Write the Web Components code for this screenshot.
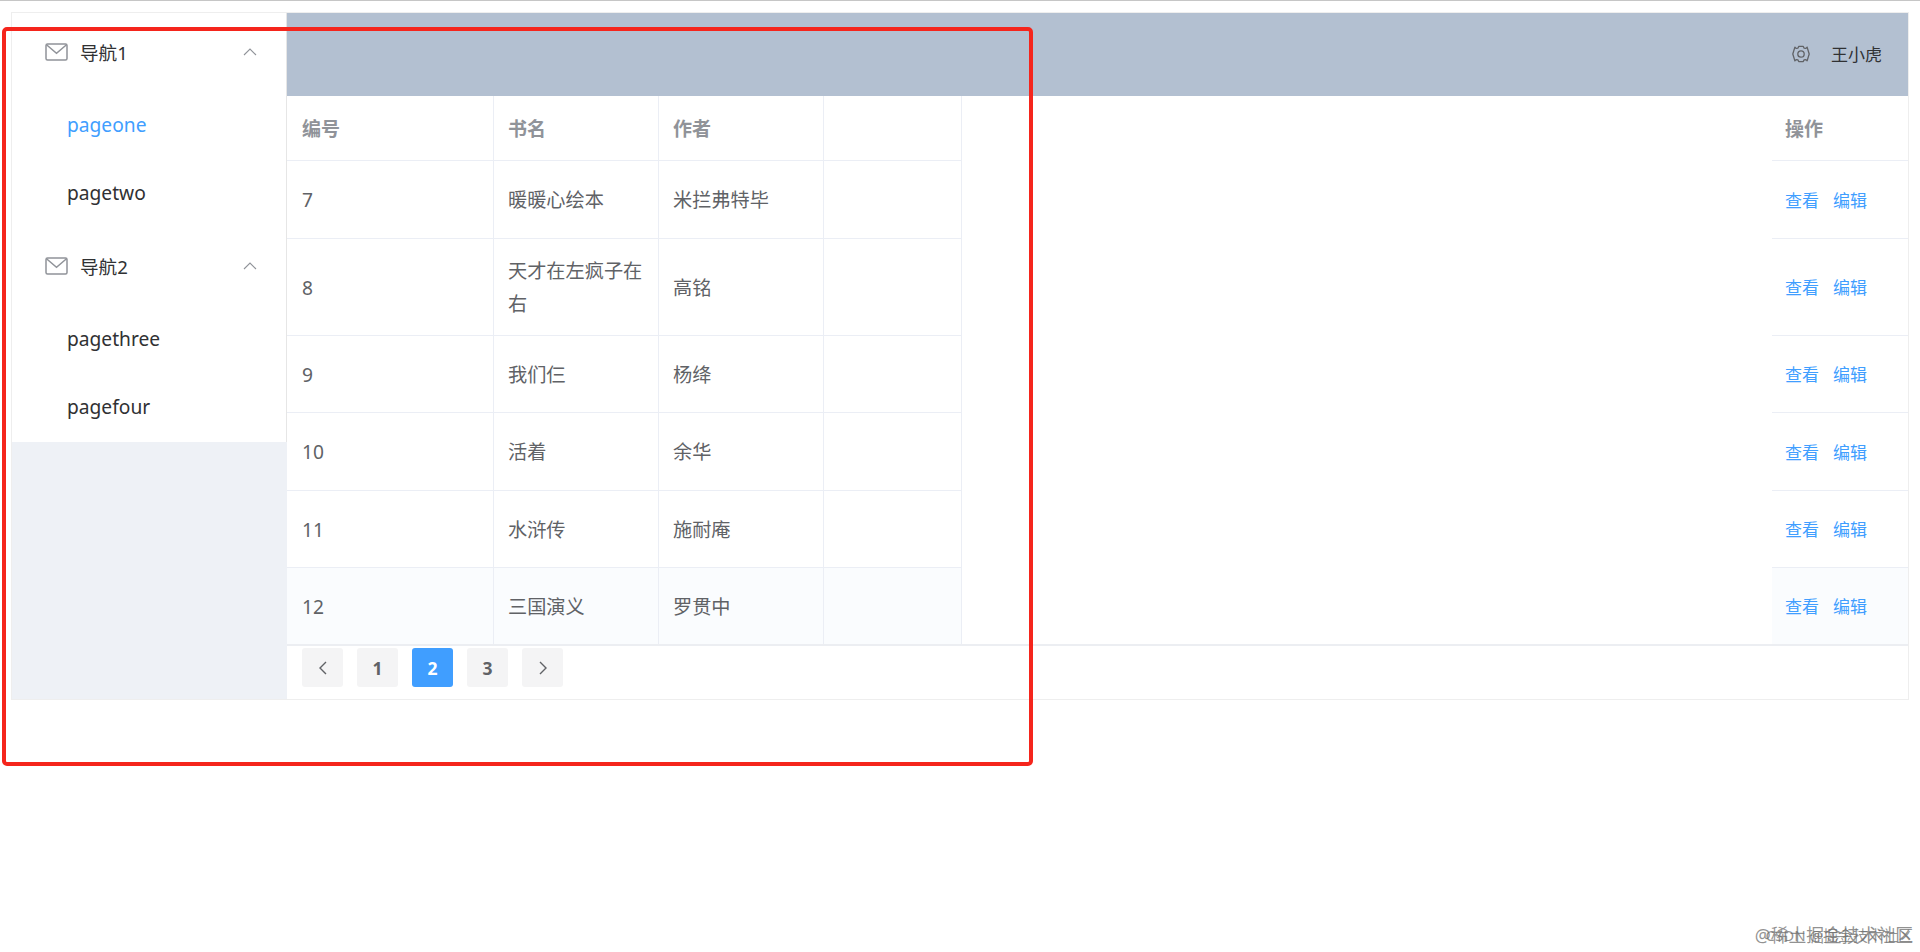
<!DOCTYPE html>
<html lang="zh">
<head>
<meta charset="utf-8">
<title>图书列表</title>
<style>
  html, body { margin: 0; padding: 0; background: #fff; }
  body { font-family: "Noto Sans", "Noto Sans CJK SC", sans-serif; height: 952px; overflow: hidden; position: relative; }
</style>
</head>
<body>
<app-shell>
  <side-menu slot="side">
    <menu-group title="导航1">
      <menu-link active>pageone</menu-link>
      <menu-link>pagetwo</menu-link>
    </menu-group>
    <menu-group title="导航2">
      <menu-link>pagethree</menu-link>
      <menu-link>pagefour</menu-link>
    </menu-group>
  </side-menu>
  <top-bar slot="main">王小虎</top-bar>
  <book-table slot="main"></book-table>
  <page-nav slot="main" pages="3" current="2"></page-nav>
</app-shell>
<mark-box></mark-box>
<water-mark></water-mark>

<script>
// every component below keeps its markup and style in an open shadow root
function mount(el, html) {
  el.attachShadow({ mode: 'open' }).innerHTML = html;
}

class AppShell extends HTMLElement {
  constructor() {
    super();
    mount(this, `
      <style>
        :host { display: block; border-top: 1px solid #c6c6c6; padding: 11px 11px 0; }
        .frame { display: flex; height: 688px; box-sizing: border-box; border: 1px solid #eeeeee; }
        .side { width: 275px; flex: none; display: flex; }
        .main { flex: 1; min-width: 0; display: flex; flex-direction: column; }
      </style>
      <div class="frame">
        <div class="side"><slot name="side"></slot></div>
        <div class="main"><slot name="main"></slot></div>
      </div>`);
  }
}

class SideMenu extends HTMLElement {
  constructor() {
    super();
    mount(this, `
      <style>
        :host { display: block; flex: 1; background: #eef1f6; }
        .list { background: #fff; border-right: 1px solid #e6e6e6; padding-bottom: 1px; }
      </style>
      <div class="list"><slot></slot></div>`);
  }
}

class MenuGroup extends HTMLElement {
  constructor() {
    super();
    mount(this, `
      <style>
        :host { display: block; }
        .title { height: 78px; display: flex; align-items: center; padding: 0 29px 0 33px; color: #303133; font-size: 18.6px; }
        .name { flex: 1; margin-left: 12px; position: relative; top: -1px; }
        svg { display: block; flex: none; }
      </style>
      <div class="title">
        <svg width="23" height="18" viewBox="0 0 23 18" fill="none" stroke="#909399" stroke-width="1.5">
          <rect x="1" y="1" width="21" height="16" rx="1.5"/>
          <path d="M1.5 1.8 L11.5 10.2 L21.5 1.8"/>
        </svg>
        <span class="name"></span>
        <svg width="14" height="8" viewBox="0 0 14 8" fill="none" stroke="#909399" stroke-width="1.1"><path d="M1 7 L7 1 L13 7"/></svg>
      </div>
      <slot></slot>`);
  }
  connectedCallback() {
    this.shadowRoot.querySelector('.name').textContent = this.getAttribute('title');
    this.removeAttribute('title');
  }
}

class MenuLink extends HTMLElement {
  constructor() {
    super();
    mount(this, `
      <style>
        :host { display: flex; align-items: center; box-sizing: border-box; height: 68px; padding: 0 0 2px 55px; color: #303133; font-size: 19.2px; }
        :host([active]) { color: #409eff; }
      </style>
      <slot></slot>`);
  }
}

class GearIcon extends HTMLElement {
  constructor() {
    super();
    mount(this, `
      <style>
        :host { display: block; width: 18px; height: 18px; }
        svg { display: block; }
      </style>
      <svg width="18" height="18" viewBox="0 0 18 18" fill="none" stroke="#606266" stroke-width="1.3" stroke-linejoin="round">
        <path d="M6.7 1.4 H11.3 L12 3.1 L13.9 3.4 L15.1 2.1 L17.2 9 L15.1 15.9 L13.9 14.6 L12 14.9 L11.3 16.6 H6.7 L6 14.9 L4.1 14.6 L2.9 15.9 L.8 9 L2.9 2.1 L4.1 3.4 L6 3.1 Z"/>
        <circle cx="9" cy="9" r="3.2"/>
      </svg>`);
  }
}

class TopBar extends HTMLElement {
  constructor() {
    super();
    mount(this, `
      <style>
        :host { display: flex; align-items: center; justify-content: flex-end; flex: none; box-sizing: border-box; height: 83px; padding: 0 26px 2px 0; background: #b3c0d1; color: #303133; font-size: 17px; }
        gear-icon { margin-right: 21px; }
      </style>
      <gear-icon></gear-icon><span><slot></slot></span>`);
  }
}

const BOOKS = [
  [7, '暖暖心绘本', '米拦弗特毕'],
  [8, '天才在左疯子在右', '高铭'],
  [9, '我们仨', '杨绛'],
  [10, '活着', '余华'],
  [11, '水浒传', '施耐庵'],
  [12, '三国演义', '罗贯中']
];
const ROW_HEIGHTS = [78, 97, 77, 78, 77, 76];

class BookTable extends HTMLElement {
  constructor() {
    super();
    const rows = BOOKS.map((b, i) => `
      <tr class="${i === 5 ? 'hover' : ''}" style="height:${ROW_HEIGHTS[i]}px">
        <td>${b[0]}</td><td>${b[1]}</td><td>${b[2]}</td><td></td>
        <td class="gap"></td>
        <td class="ops"><a>查看</a><a>编辑</a></td>
      </tr>`).join('');
    mount(this, `
      <style>
        :host { display: block; flex: none; font-size: 19.2px; color: #606266; }
        table { border-collapse: separate; border-spacing: 0; table-layout: fixed; width: 1621px; }
        th, td { box-sizing: border-box; padding: 0 8px 0 14px; text-align: left; border-right: 1px solid #ebeef5; border-bottom: 1px solid #ebeef5; line-height: 33px; font-weight: 400; }
        th { color: #909399; font-weight: 700; font-size: 19px; height: 65px; padding-top: 2px; }
        th:first-child, td:first-child { padding-left: 15px; }
        .gap { border-right: 0; border-bottom: 0; background: #fff !important; }
        .ops, th.ops { border-right: 0; padding-left: 13px; padding-right: 0; }
        .ops a { color: #409eff; font-size: 17px; margin-right: 14px; }
        .hover td { background: #fafcfe; }
        tr:last-child td { border-bottom: 0; }
        .foot { height: 2px; background: #eceef2; }
      </style>
      <table>
        <colgroup><col style="width:207px"><col style="width:165px"><col style="width:165px"><col style="width:138px"><col style="width:810px"><col style="width:136px"></colgroup>
        <thead><tr><th>编号</th><th>书名</th><th>作者</th><th></th><th class="gap"></th><th class="ops">操作</th></tr></thead>
        <tbody>${rows}</tbody>
      </table>
      <div class="foot"></div>`);
  }
}

class PageNav extends HTMLElement {
  constructor() {
    super();
    mount(this, `
      <style>
        :host { display: flex; gap: 14px; padding: 2px 0 0 15px; }
        span { width: 41px; height: 39px; display: flex; align-items: center; justify-content: center; background: #f4f4f5; color: #606266; border-radius: 3px; font-size: 17.5px; font-weight: 700; }
        span.on { background: #409eff; color: #fff; }
      </style>
      <div id="btns" style="display:contents"></div>`);
  }
  connectedCallback() {
    const pages = +this.getAttribute('pages');
    const current = +this.getAttribute('current');
    const arrow = d => `<span><svg width="10" height="14" viewBox="0 0 10 14" fill="none" stroke="#606266" stroke-width="1.4"><path d="${d}"/></svg></span>`;
    let html = arrow('M8 1 L2 7 L8 13');
    for (let p = 1; p <= pages; p++) {
      html += `<span class="${p === current ? 'on' : ''}">${p}</span>`;
    }
    html += arrow('M2 1 L8 7 L2 13');
    this.shadowRoot.getElementById('btns').innerHTML = html;
  }
}

// the red rectangle somebody drew on the screenshot, it lies over everything
class MarkBox extends HTMLElement {
  constructor() {
    super();
    mount(this, `
      <style>
        :host { display: block; position: absolute; left: 2px; top: 27px; width: 1031px; height: 739px; box-sizing: border-box; border: 4px solid #f5251c; border-radius: 5px; pointer-events: none; }
      </style>`);
  }
}

// two blog watermarks printed on top of each other
class WaterMark extends HTMLElement {
  constructor() {
    super();
    mount(this, `
      <style>
        :host { display: block; position: absolute; right: 7px; top: 924px; width: 160px; height: 22px; color: rgba(110,110,110,.75); white-space: nowrap; line-height: 22px; }
        div { position: absolute; right: 0; top: 0; }
        .a { font-size: 17.8px; }
        .b { font-size: 15px; }
      </style>
      <div class="a">@稀土掘金技术社区</div>
      <div class="b">CSDN @掘金技术社区</div>`);
  }
}

customElements.define('gear-icon', GearIcon);
customElements.define('app-shell', AppShell);
customElements.define('side-menu', SideMenu);
customElements.define('menu-group', MenuGroup);
customElements.define('menu-link', MenuLink);
customElements.define('top-bar', TopBar);
customElements.define('book-table', BookTable);
customElements.define('page-nav', PageNav);
customElements.define('mark-box', MarkBox);
customElements.define('water-mark', WaterMark);
</script>
</body>
</html>
